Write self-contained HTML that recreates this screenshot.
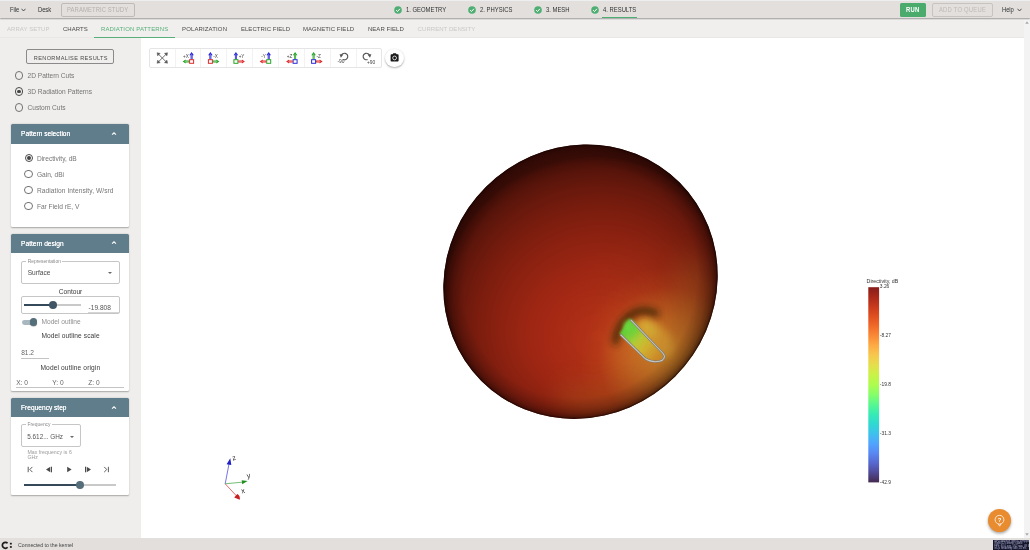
<!DOCTYPE html>
<html lang="en">
<head>
<meta charset="utf-8">
<title>Results - Radiation Patterns</title>
<style>
*{box-sizing:border-box;margin:0;padding:0}
html,body{width:1030px;height:550px;overflow:hidden;background:#fff}
body{position:relative;opacity:.999;font-family:"Liberation Sans",sans-serif;font-size:6.6px;color:#757575}
.a{position:absolute}
.t{position:absolute;white-space:nowrap;line-height:10px;height:10px}
/* top bar */
#topbar{left:0;top:0;width:1030px;height:18.3px;background:#e2dfdd;border-top:1px solid #eceef0;box-shadow:0 .8px 1.2px rgba(0,0,0,.4);z-index:5}
#topbar .t{font-size:6.4px;color:#333;transform:scaleX(.92);transform-origin:0 50%;margin-top:.1px}
.btn-o{position:absolute;border:1px solid #bdbab8;border-radius:2px}
.chk{position:absolute;width:8px;height:8px}
/* sub tabs */
#subbar{left:0;top:19px;width:1030px;height:19px;background:#f0efed;border-bottom:1px solid #e8e7e5}
#subbar .t{font-size:6px;letter-spacing:.06px;color:#4a4a4a;top:5px}
#subbar .dis{color:#c9c8c6}
#subbar .act{color:#57b07a}
/* sidebar */
#side{left:0;top:38px;width:141px;height:500px;background:#efeeec}
#side .t{margin-top:.6px}
.radio{position:absolute;width:8.4px;height:8.4px;border:.9px solid #737373;border-radius:50%;background:transparent}
.radio.on{border-color:#4a4a4a}
.radio.on::after{content:"";position:absolute;left:1.4px;top:1.4px;width:3.8px;height:3.8px;border-radius:50%;background:#444}
.panel{position:absolute;left:11.4px;width:117.8px;background:#fff;border-radius:1.5px;box-shadow:0 .5px 1.5px rgba(0,0,0,.3)}
.ph{position:absolute;left:0;top:0;width:100%;height:19.5px;background:#607d8b;border-radius:1.5px 1.5px 0 0}
.ph .t{left:9.7px;top:4.3px;color:#fff;font-size:6.6px;text-shadow:0 0 .3px #fff}
.ph svg{position:absolute;left:100px;top:6.9px;width:6px;height:5.2px}
.dark{color:#3a3a3a}
.fld{position:absolute;border:1px solid #c6c6c6;border-radius:2px;background:#fff}
.lbl{position:absolute;font-size:4.9px;line-height:6px;background:#fff;padding:0 1.5px;color:#8a8a8a;white-space:nowrap}
.tri{position:absolute;width:0;height:0;border-left:2px solid transparent;border-right:2px solid transparent;border-top:2.2px solid #666}
.ul{position:absolute;height:1px;background:#c4c4c4}
/* main */
#main{left:141px;top:38px;width:883px;height:500px;background:#fff}
#sb{left:1024px;top:20px;width:6px;height:518px;background:#f3f3f3}
#tool{left:149px;top:48px;width:233px;height:20px;border:1px solid #e5e5e5;border-radius:2px;background:#fff}
#tool i{position:absolute;top:0;width:1px;height:18px;background:#f2f2f2}
#cam{left:385px;top:48.5px;width:18.5px;height:18.5px;border-radius:50%;background:#fff;box-shadow:0 .8px 2px rgba(0,0,0,.35)}
/* status */
#status{left:0;top:538px;width:1030px;height:12px;background:#e2dfdd}
#fab{left:988px;top:509px;width:23px;height:23px;border-radius:50%;background:#e98b2f;box-shadow:0 1.5px 3px rgba(0,0,0,.35)}
</style>
</head>
<body>

<!-- ======= TOP BAR ======= -->
<div id="topbar" class="a">
  <span class="t" style="left:9.6px;top:4px;letter-spacing:-.1px">File</span>
  <svg class="a" style="left:20.6px;top:6.6px;width:5px;height:4px" viewBox="0 0 10 8"><path d="M1 1.5 L5 6 L9 1.5" fill="none" stroke="#333" stroke-width="1.6"/></svg>
  <span class="t" style="left:38px;top:4px;letter-spacing:-.1px">Desk</span>
  <div class="btn-o" style="left:60.8px;top:2px;width:74.6px;height:14px"></div>
  <span class="t" style="left:67.4px;top:4px;color:#b3b0ae;letter-spacing:.1px">PARAMETRIC STUDY</span>

  <svg class="chk" style="left:393.7px;top:5px" viewBox="0 0 16 16"><circle cx="8" cy="8" r="7.6" fill="#4fae72"/><path d="M4.2 8.3 L7 11 L11.8 5.6" fill="none" stroke="#fff" stroke-width="2"/></svg>
  <span class="t" style="left:405.8px;top:4px">1. GEOMETRY</span>
  <svg class="chk" style="left:467.9px;top:5px" viewBox="0 0 16 16"><circle cx="8" cy="8" r="7.6" fill="#4fae72"/><path d="M4.2 8.3 L7 11 L11.8 5.6" fill="none" stroke="#fff" stroke-width="2"/></svg>
  <span class="t" style="left:479.8px;top:4px">2. PHYSICS</span>
  <svg class="chk" style="left:533.7px;top:5px" viewBox="0 0 16 16"><circle cx="8" cy="8" r="7.6" fill="#4fae72"/><path d="M4.2 8.3 L7 11 L11.8 5.6" fill="none" stroke="#fff" stroke-width="2"/></svg>
  <span class="t" style="left:545.5px;top:4px">3. MESH</span>
  <svg class="chk" style="left:591px;top:5px" viewBox="0 0 16 16"><circle cx="8" cy="8" r="7.6" fill="#4fae72"/><path d="M4.2 8.3 L7 11 L11.8 5.6" fill="none" stroke="#fff" stroke-width="2"/></svg>
  <span class="t" style="left:602.9px;top:4px">4. RESULTS</span>
  <div class="a" style="left:602.3px;top:16px;width:34.8px;height:1.3px;background:#4fae72"></div>

  <div class="a" style="left:899.7px;top:2.2px;width:26.5px;height:13.5px;background:#4aab6d;border-radius:1.5px"></div>
  <span class="t" style="left:905.9px;top:4px;color:#fff;font-weight:700;letter-spacing:.25px">RUN</span>
  <div class="btn-o" style="left:932px;top:2.2px;width:60.5px;height:13.5px;border-color:#c6c3c1"></div>
  <span class="t" style="left:939px;top:4px;color:#bdbab8;letter-spacing:.22px">ADD TO QUEUE</span>
  <span class="t" style="left:1002.3px;top:4px;letter-spacing:-.1px">Help</span>
  <svg class="a" style="left:1016.8px;top:6.6px;width:5px;height:4px" viewBox="0 0 10 8"><path d="M1 1.5 L5 6 L9 1.5" fill="none" stroke="#333" stroke-width="1.6"/></svg>
</div>

<!-- ======= SUB TABS ======= -->
<div id="subbar" class="a">
  <span class="t dis" style="left:7px">ARRAY SETUP</span>
  <span class="t" style="left:62.9px">CHARTS</span>
  <span class="t act" style="left:101px;letter-spacing:.13px">RADIATION PATTERNS</span>
  <div class="a" style="left:94.2px;top:17.9px;width:81px;height:1.1px;background:#57b07a"></div>
  <span class="t" style="left:182px;letter-spacing:.13px">POLARIZATION</span>
  <span class="t" style="left:240.9px">ELECTRIC FIELD</span>
  <span class="t" style="left:303px">MAGNETIC FIELD</span>
  <span class="t" style="left:367.9px">NEAR FIELD</span>
  <span class="t dis" style="left:417.6px">CURRENT DENSITY</span>
</div>

<!-- ======= SIDEBAR ======= -->
<div id="side" class="a">
  <div class="btn-o" style="left:26.3px;top:11px;width:87.7px;height:14.6px;border-color:#8a8a8a;border-radius:2px"></div>
  <span class="t" style="left:33.8px;top:14px;font-size:5.6px;letter-spacing:.34px;color:#4a4a4a">RENORMALISE RESULTS</span>

  <div class="radio" style="left:14.8px;top:33.2px"></div>
  <span class="t" style="left:27.5px;top:32.4px">2D Pattern Cuts</span>
  <div class="radio on" style="left:14.8px;top:49.2px"></div>
  <span class="t" style="left:27.5px;top:48.4px">3D Radiation Patterns</span>
  <div class="radio" style="left:14.8px;top:65.3px"></div>
  <span class="t" style="left:27.5px;top:64.5px">Custom Cuts</span>

  <!-- Pattern selection -->
  <div class="panel" style="top:86.2px;height:102.8px">
    <div class="ph"><span class="t">Pattern selection</span>
      <svg viewBox="0 0 14 12"><path d="M2.5 8.5 L7 4 L11.5 8.5" fill="none" stroke="#fff" stroke-width="2.6"/></svg></div>
    <div class="radio on" style="left:13.3px;top:29.8px"></div>
    <span class="t" style="left:25.5px;top:29.2px">Directivity, dB</span>
    <div class="radio" style="left:13.1px;top:45.6px"></div>
    <span class="t" style="left:25.5px;top:44.8px">Gain, dBi</span>
    <div class="radio" style="left:13.1px;top:61.6px"></div>
    <span class="t" style="left:25.5px;top:60.8px;letter-spacing:.08px">Radiation Intensity, W/srd</span>
    <div class="radio" style="left:13.1px;top:77.7px"></div>
    <span class="t" style="left:25.5px;top:76.9px">Far Field rE, V</span>
  </div>

  <!-- Pattern design -->
  <div class="panel" style="top:195.6px;height:157.4px">
    <div class="ph"><span class="t" style="top:5px">Pattern design</span>
      <svg viewBox="0 0 14 12"><path d="M2.5 8.5 L7 4 L11.5 8.5" fill="none" stroke="#fff" stroke-width="2.6"/></svg></div>
    <div class="fld" style="left:9.8px;top:27.4px;width:98.6px;height:22.6px"></div>
    <span class="lbl" style="left:14.8px;top:25.4px">Representation</span>
    <span class="t dark" style="left:16.3px;top:33.9px;color:#4a4a4a">Surface</span>
    <div class="tri" style="left:96.9px;top:38.6px"></div>

    <span class="t dark" style="left:47.4px;top:52.9px">Contour</span>
    <div class="fld" style="left:9.8px;top:62.6px;width:98.6px;height:17.6px"></div>
    <div class="a" style="left:12.7px;top:70.8px;width:57px;height:1.2px;background:#c9c9c9"></div>
    <div class="a" style="left:12.7px;top:70.6px;width:29px;height:1.6px;background:#34495a"></div>
    <div class="a" style="left:37.5px;top:67.4px;width:8px;height:8px;border-radius:50%;background:#3f5565"></div>
    <span class="t" style="left:77.2px;top:68.7px;color:#555">-19.808</span>
    <div class="ul" style="left:76.3px;top:78.4px;width:31px;background:#d5d5d5"></div>

    <div class="a" style="left:10.4px;top:86.2px;width:14px;height:4.8px;border-radius:2.4px;background:#a9b8c0"></div>
    <div class="a" style="left:18.4px;top:84.7px;width:7.6px;height:7.6px;border-radius:50%;background:#546e7a;box-shadow:0 .5px 1px rgba(0,0,0,.4)"></div>
    <span class="t" style="left:30.1px;top:83px;color:#8f8f8f">Model outline</span>

    <span class="t dark" style="left:30.1px;top:96.9px;letter-spacing:.09px">Model outline scale</span>
    <span class="t" style="left:9.8px;top:113.8px;color:#666">81.2</span>
    <div class="ul" style="left:9.5px;top:124.2px;width:28px"></div>
    <span class="t dark" style="left:29.1px;top:128.6px;letter-spacing:.13px">Model outline origin</span>
    <span class="t" style="left:4.9px;top:143.7px;color:#666">X: 0</span>
    <span class="t" style="left:40.9px;top:143.7px;color:#666">Y: 0</span>
    <span class="t" style="left:76.9px;top:143.7px;color:#666">Z: 0</span>
    <div class="ul" style="left:4.2px;top:153.6px;width:108.7px"></div>
  </div>

  <!-- Frequency step -->
  <div class="panel" style="top:359.8px;height:97.2px">
    <div class="ph"><span class="t">Frequency step</span>
      <svg viewBox="0 0 14 12"><path d="M2.5 8.5 L7 4 L11.5 8.5" fill="none" stroke="#fff" stroke-width="2.6"/></svg></div>
    <div class="fld" style="left:9.7px;top:26.7px;width:60.3px;height:23px"></div>
    <span class="lbl" style="left:14.5px;top:24px">Frequency</span>
    <span class="t" style="left:15.8px;top:33.4px;font-size:6.4px;color:#555">5.612... GHz</span>
    <div class="tri" style="left:58.2px;top:38px"></div>
    <div class="a" style="left:16px;top:52.2px;width:46px;font-size:5.2px;line-height:5.1px;color:#9a9a9a;letter-spacing:.05px">Max frequency is 6 GHz</div>

    <svg class="a" style="left:14px;top:67px;width:90px;height:9px" viewBox="0 0 90 9">
      <g fill="none" stroke="#4a4a4a" stroke-width=".9">
        <path d="M3.2 1.8V7.2M7.4 1.9L4.8 4.5L7.4 7.1"/>
        <path d="M79.2 1.9L81.8 4.5L79.2 7.1M83.4 1.8V7.2"/>
      </g>
      <g fill="#4a4a4a">
        <path d="M25.3 1.7L21 4.5L25.3 7.3Z"/><rect x="26" y="1.7" width="1" height="5.6"/>
        <path d="M42.2 1.7L46.6 4.5L42.2 7.3Z"/>
        <rect x="60" y="1.7" width="1" height="5.6"/><path d="M61.7 1.7L66 4.5L61.7 7.3Z"/>
      </g>
    </svg>
    <div class="a" style="left:12.5px;top:86.7px;width:92px;height:1.2px;background:#c9c9c9"></div>
    <div class="a" style="left:12.5px;top:86.5px;width:56px;height:1.6px;background:#34495a"></div>
    <div class="a" style="left:64.6px;top:83.4px;width:7.8px;height:7.8px;border-radius:50%;background:#546e7a"></div>
  </div>
</div>

<!-- ======= MAIN ======= -->
<div id="main" class="a"></div>
<div id="sb" class="a">
  <svg class="a" style="left:1px;top:1px;width:4px;height:3px" viewBox="0 0 8 6"><path d="M4 .5L7.5 5.5H.5Z" fill="#a8a8a8"/></svg>
  <svg class="a" style="left:1px;top:513px;width:4px;height:3px" viewBox="0 0 8 6"><path d="M4 5.5L7.5 .5H.5Z" fill="#a8a8a8"/></svg>
</div>


<!-- ======= 3D VIEW ======= -->
<svg class="a" style="left:0;top:0;width:1030px;height:550px" viewBox="0 0 1030 550">
  <defs>
    <radialGradient id="sg" gradientUnits="userSpaceOnUse" cx="670" cy="358" r="130">
      <stop offset="0" stop-color="#dc8c2c"/>
      <stop offset=".15" stop-color="#d78029"/>
      <stop offset=".3" stop-color="#cd6b24"/>
      <stop offset=".42" stop-color="#c3551e"/>
      <stop offset=".55" stop-color="#b73a18"/>
      <stop offset=".7" stop-color="#b02f16"/>
      <stop offset="1" stop-color="#ae2a15"/>
    </radialGradient>
    <radialGradient id="rim" gradientUnits="objectBoundingBox" cx=".5" cy=".5" r=".5">
      <stop offset="0" stop-color="#120100" stop-opacity="0"/>
      <stop offset=".85" stop-color="#120100" stop-opacity="0"/>
      <stop offset=".92" stop-color="#120100" stop-opacity=".13"/>
      <stop offset=".96" stop-color="#120100" stop-opacity=".25"/>
      <stop offset=".985" stop-color="#120100" stop-opacity=".42"/>
      <stop offset="1" stop-color="#120100" stop-opacity=".85"/>
    </radialGradient>
    <linearGradient id="lg" gradientUnits="userSpaceOnUse" x1="626" y1="327" x2="658" y2="358">
      <stop offset="0" stop-color="#5ccf3c"/>
      <stop offset=".22" stop-color="#86d63a"/>
      <stop offset=".42" stop-color="#c2d236"/>
      <stop offset=".62" stop-color="#e0c033"/>
      <stop offset="1" stop-color="#e79c2e"/>
    </linearGradient>
    <mask id="light" maskUnits="userSpaceOnUse" x="430" y="130" width="300" height="300">
      <rect x="430" y="130" width="300" height="300" fill="rgb(79,79,79)"/>
      <g fill="#fff" transform="translate(580.5 281.7) rotate(-45) scale(140.3 134.0) rotate(117.00)">
        <path d="M-0.9006 0A0.9071 0.9999 0 1 1 0.9137 0A0.9071 0.9999 0 1 1 -0.9006 0ZM0.0371 -2H2V2H0.0371Z" fill-opacity="0.0292"/>
        <path d="M-0.8937 0A0.9068 0.9995 0 1 1 0.9199 0A0.9068 0.9995 0 1 1 -0.8937 0ZM0.0743 -2H2V2H0.0743Z" fill-opacity="0.0241"/>
        <path d="M-0.8865 0A0.9063 0.9989 0 1 1 0.9260 0A0.9063 0.9989 0 1 1 -0.8865 0ZM0.1114 -2H2V2H0.1114Z" fill-opacity="0.0228"/>
        <path d="M-0.8792 0A0.9055 0.9980 0 1 1 0.9318 0A0.9055 0.9980 0 1 1 -0.8792 0ZM0.1486 -2H2V2H0.1486Z" fill-opacity="0.0222"/>
        <path d="M-0.8716 0A0.9045 0.9969 0 1 1 0.9373 0A0.9045 0.9969 0 1 1 -0.8716 0ZM0.1857 -2H2V2H0.1857Z" fill-opacity="0.0219"/>
        <path d="M-0.8638 0A0.9033 0.9956 0 1 1 0.9427 0A0.9033 0.9956 0 1 1 -0.8638 0ZM0.2229 -2H2V2H0.2229Z" fill-opacity="0.0217"/>
        <path d="M-0.8558 0A0.9018 0.9940 0 1 1 0.9478 0A0.9018 0.9940 0 1 1 -0.8558 0ZM0.2600 -2H2V2H0.2600Z" fill-opacity="0.0216"/>
        <path d="M-0.8476 0A0.9001 0.9922 0 1 1 0.9527 0A0.9001 0.9922 0 1 1 -0.8476 0ZM0.2972 -2H2V2H0.2972Z" fill-opacity="0.0216"/>
        <path d="M-0.8391 0A0.8982 0.9901 0 1 1 0.9574 0A0.8982 0.9901 0 1 1 -0.8391 0ZM0.3343 -2H2V2H0.3343Z" fill-opacity="0.0217"/>
        <path d="M-0.8304 0A0.8961 0.9877 0 1 1 0.9618 0A0.8961 0.9877 0 1 1 -0.8304 0ZM0.3715 -2H2V2H0.3715Z" fill-opacity="0.0218"/>
        <path d="M-0.8215 0A0.8937 0.9851 0 1 1 0.9660 0A0.8937 0.9851 0 1 1 -0.8215 0ZM0.4086 -2H2V2H0.4086Z" fill-opacity="0.0219"/>
        <path d="M-0.8123 0A0.8912 0.9823 0 1 1 0.9700 0A0.8912 0.9823 0 1 1 -0.8123 0ZM0.4458 -2H2V2H0.4458Z" fill-opacity="0.0221"/>
        <path d="M-0.8029 0A0.8883 0.9792 0 1 1 0.9738 0A0.8883 0.9792 0 1 1 -0.8029 0ZM0.4829 -2H2V2H0.4829Z" fill-opacity="0.0224"/>
        <path d="M-0.7933 0A0.8853 0.9758 0 1 1 0.9773 0A0.8853 0.9758 0 1 1 -0.7933 0ZM0.5201 -2H2V2H0.5201Z" fill-opacity="0.0226"/>
        <path d="M-0.7834 0A0.8820 0.9721 0 1 1 0.9806 0A0.8820 0.9721 0 1 1 -0.7834 0ZM0.5572 -2H2V2H0.5572Z" fill-opacity="0.0229"/>
        <path d="M-0.7733 0A0.8784 0.9682 0 1 1 0.9836 0A0.8784 0.9682 0 1 1 -0.7733 0ZM0.5944 -2H2V2H0.5944Z" fill-opacity="0.0232"/>
        <path d="M-0.7629 0A0.8747 0.9641 0 1 1 0.9864 0A0.8747 0.9641 0 1 1 -0.7629 0ZM0.6315 -2H2V2H0.6315Z" fill-opacity="0.0235"/>
        <path d="M-0.7523 0A0.8706 0.9596 0 1 1 0.9889 0A0.8706 0.9596 0 1 1 -0.7523 0ZM0.6687 -2H2V2H0.6687Z" fill-opacity="0.0239"/>
        <path d="M-0.7415 0A0.8663 0.9549 0 1 1 0.9912 0A0.8663 0.9549 0 1 1 -0.7415 0ZM0.7058 -2H2V2H0.7058Z" fill-opacity="0.0242"/>
        <path d="M-0.7304 0A0.8618 0.9499 0 1 1 0.9932 0A0.8618 0.9499 0 1 1 -0.7304 0ZM0.7430 -2H2V2H0.7430Z" fill-opacity="0.0247"/>
        <path d="M-0.7190 0A0.8570 0.9446 0 1 1 0.9950 0A0.8570 0.9446 0 1 1 -0.7190 0ZM0.7801 -2H2V2H0.7801Z" fill-opacity="0.0251"/>
        <path d="M-0.7074 0A0.8520 0.9391 0 1 1 0.9965 0A0.8520 0.9391 0 1 1 -0.7074 0ZM0.8173 -2H2V2H0.8173Z" fill-opacity="0.0256"/>
        <path d="M-0.6955 0A0.8466 0.9332 0 1 1 0.9978 0A0.8466 0.9332 0 1 1 -0.6955 0ZM0.8544 -2H2V2H0.8544Z" fill-opacity="0.0260"/>
        <path d="M-0.6833 0A0.8410 0.9270 0 1 1 0.9988 0A0.8410 0.9270 0 1 1 -0.6833 0ZM0.8916 -2H2V2H0.8916Z" fill-opacity="0.0266"/>
        <path d="M-0.6709 0A0.8352 0.9205 0 1 1 0.9995 0A0.8352 0.9205 0 1 1 -0.6709 0ZM0.9287 -2H2V2H0.9287Z" fill-opacity="0.0271"/>
        <path d="M-0.6581 0A0.8290 0.9138 0 1 1 0.9999 0A0.8290 0.9138 0 1 1 -0.6581 0ZM0.9659 -2H2V2H0.9659Z" fill-opacity="0.0277"/>
        <path d="M-0.6451 0A0.8226 0.9067 0 1 1 1.0000 0A0.8226 0.9067 0 1 1 -0.6451 0Z" fill-opacity="0.0283"/>
        <path d="M-0.6318 0A0.8158 0.8992 0 1 1 0.9998 0A0.8158 0.8992 0 1 1 -0.6318 0Z" fill-opacity="0.0290"/>
        <path d="M-0.6182 0A0.8088 0.8914 0 1 1 0.9993 0A0.8088 0.8914 0 1 1 -0.6182 0Z" fill-opacity="0.0297"/>
        <path d="M-0.6042 0A0.8014 0.8833 0 1 1 0.9986 0A0.8014 0.8833 0 1 1 -0.6042 0Z" fill-opacity="0.0305"/>
        <path d="M-0.5900 0A0.7937 0.8749 0 1 1 0.9974 0A0.7937 0.8749 0 1 1 -0.5900 0Z" fill-opacity="0.0313"/>
        <path d="M-0.5754 0A0.7857 0.8660 0 1 1 0.9960 0A0.7857 0.8660 0 1 1 -0.5754 0Z" fill-opacity="0.0321"/>
        <path d="M-0.5605 0A0.7773 0.8568 0 1 1 0.9942 0A0.7773 0.8568 0 1 1 -0.5605 0Z" fill-opacity="0.0330"/>
        <path d="M-0.5452 0A0.7686 0.8472 0 1 1 0.9921 0A0.7686 0.8472 0 1 1 -0.5452 0Z" fill-opacity="0.0340"/>
        <path d="M-0.5295 0A0.7596 0.8372 0 1 1 0.9896 0A0.7596 0.8372 0 1 1 -0.5295 0Z" fill-opacity="0.0350"/>
        <path d="M-0.5135 0A0.7501 0.8268 0 1 1 0.9867 0A0.7501 0.8268 0 1 1 -0.5135 0Z" fill-opacity="0.0362"/>
        <path d="M-0.4971 0A0.7403 0.8159 0 1 1 0.9834 0A0.7403 0.8159 0 1 1 -0.4971 0Z" fill-opacity="0.0374"/>
        <path d="M-0.4803 0A0.7300 0.8046 0 1 1 0.9797 0A0.7300 0.8046 0 1 1 -0.4803 0Z" fill-opacity="0.0386"/>
        <path d="M-0.4630 0A0.7193 0.7929 0 1 1 0.9756 0A0.7193 0.7929 0 1 1 -0.4630 0Z" fill-opacity="0.0400"/>
        <path d="M-0.4453 0A0.7082 0.7806 0 1 1 0.9711 0A0.7082 0.7806 0 1 1 -0.4453 0Z" fill-opacity="0.0416"/>
        <path d="M-0.4272 0A0.6966 0.7679 0 1 1 0.9661 0A0.6966 0.7679 0 1 1 -0.4272 0Z" fill-opacity="0.0432"/>
        <path d="M-0.4085 0A0.6846 0.7545 0 1 1 0.9606 0A0.6846 0.7545 0 1 1 -0.4085 0Z" fill-opacity="0.0450"/>
        <path d="M-0.3894 0A0.6720 0.7407 0 1 1 0.9546 0A0.6720 0.7407 0 1 1 -0.3894 0Z" fill-opacity="0.0469"/>
        <path d="M-0.3697 0A0.6588 0.7262 0 1 1 0.9480 0A0.6588 0.7262 0 1 1 -0.3697 0Z" fill-opacity="0.0491"/>
        <path d="M-0.3494 0A0.6451 0.7111 0 1 1 0.9408 0A0.6451 0.7111 0 1 1 -0.3494 0Z" fill-opacity="0.0514"/>
        <path d="M-0.3285 0A0.6308 0.6953 0 1 1 0.9331 0A0.6308 0.6953 0 1 1 -0.3285 0Z" fill-opacity="0.0540"/>
        <path d="M-0.3069 0A0.6158 0.6787 0 1 1 0.9247 0A0.6158 0.6787 0 1 1 -0.3069 0Z" fill-opacity="0.0569"/>
        <path d="M-0.2846 0A0.6001 0.6614 0 1 1 0.9155 0A0.6001 0.6614 0 1 1 -0.2846 0Z" fill-opacity="0.0602"/>
        <path d="M-0.2616 0A0.5836 0.6433 0 1 1 0.9056 0A0.5836 0.6433 0 1 1 -0.2616 0Z" fill-opacity="0.0638"/>
        <path d="M-0.2377 0A0.5663 0.6242 0 1 1 0.8949 0A0.5663 0.6242 0 1 1 -0.2377 0Z" fill-opacity="0.0680"/>
        <path d="M-0.2129 0A0.5481 0.6041 0 1 1 0.8833 0A0.5481 0.6041 0 1 1 -0.2129 0Z" fill-opacity="0.0727"/>
        <path d="M-0.1872 0A0.5289 0.5830 0 1 1 0.8706 0A0.5289 0.5830 0 1 1 -0.1872 0Z" fill-opacity="0.0782"/>
        <path d="M-0.1602 0A0.5086 0.5605 0 1 1 0.8569 0A0.5086 0.5605 0 1 1 -0.1602 0Z" fill-opacity="0.0846"/>
        <path d="M-0.1321 0A0.4870 0.5367 0 1 1 0.8418 0A0.4870 0.5367 0 1 1 -0.1321 0Z" fill-opacity="0.0921"/>
        <path d="M-0.1025 0A0.4639 0.5113 0 1 1 0.8254 0A0.4639 0.5113 0 1 1 -0.1025 0Z" fill-opacity="0.1012"/>
        <path d="M-0.0712 0A0.4392 0.4841 0 1 1 0.8072 0A0.4392 0.4841 0 1 1 -0.0712 0Z" fill-opacity="0.1123"/>
        <path d="M-0.0380 0A0.4126 0.4547 0 1 1 0.7872 0A0.4126 0.4547 0 1 1 -0.0380 0Z" fill-opacity="0.1261"/>
        <path d="M-0.0024 0A0.3835 0.4227 0 1 1 0.7647 0A0.3835 0.4227 0 1 1 -0.0024 0Z" fill-opacity="0.1439"/>
        <path d="M0.0362 0A0.3515 0.3875 0 1 1 0.7393 0A0.3515 0.3875 0 1 1 0.0362 0Z" fill-opacity="0.1677"/>
        <path d="M0.0786 0A0.3157 0.3480 0 1 1 0.7100 0A0.3157 0.3480 0 1 1 0.0786 0Z" fill-opacity="0.2010"/>
        <path d="M0.1264 0A0.2745 0.3026 0 1 1 0.6754 0A0.2745 0.3026 0 1 1 0.1264 0Z" fill-opacity="0.2509"/>
        <path d="M0.1824 0A0.2250 0.2480 0 1 1 0.6325 0A0.2250 0.2480 0 1 1 0.1824 0Z" fill-opacity="0.3341"/>
        <path d="M0.2543 0A0.1598 0.1761 0 1 1 0.5738 0A0.1598 0.1761 0 1 1 0.2543 0Z" fill-opacity="0.5006"/>
        <path d="M0.3796 0A0.0406 0.0447 0 1 1 0.4607 0A0.0406 0.0447 0 1 1 0.3796 0Z" fill-opacity="0.9361"/>
      </g>
    </mask>
    <clipPath id="sc"><ellipse cx="580.5" cy="281.7" rx="140.3" ry="134" transform="rotate(-45 580.5 281.7)"/></clipPath>
    <filter id="b1" x="-50%" y="-50%" width="200%" height="200%"><feGaussianBlur stdDeviation="1.2"/></filter>
    <filter id="b8" x="-100%" y="-100%" width="300%" height="300%"><feGaussianBlur stdDeviation="12"/></filter>
    <filter id="b2" x="-50%" y="-50%" width="200%" height="200%"><feGaussianBlur stdDeviation="2"/></filter>
    <filter id="b3" x="-50%" y="-50%" width="200%" height="200%"><feGaussianBlur stdDeviation="3.5"/></filter>
    <linearGradient id="turbo" x1="0" y1="0" x2="0" y2="1">
      <stop offset="0" stop-color="#7a0402"/>
      <stop offset="0.05" stop-color="#a01101"/>
      <stop offset="0.1" stop-color="#c32402"/>
      <stop offset="0.15" stop-color="#dd3c07"/>
      <stop offset="0.2" stop-color="#ef5a11"/>
      <stop offset="0.25" stop-color="#fa7d20"/>
      <stop offset="0.3" stop-color="#fda330"/>
      <stop offset="0.35" stop-color="#f6c23a"/>
      <stop offset="0.4" stop-color="#e1dc37"/>
      <stop offset="0.45" stop-color="#c3f133"/>
      <stop offset="0.5" stop-color="#a4fc3b"/>
      <stop offset="0.55" stop-color="#78fe59"/>
      <stop offset="0.6" stop-color="#46f783"/>
      <stop offset="0.65" stop-color="#20e9ac"/>
      <stop offset="0.7" stop-color="#18d5cc"/>
      <stop offset="0.75" stop-color="#28bbeb"/>
      <stop offset="0.8" stop-color="#3e9bfe"/>
      <stop offset="0.85" stop-color="#467af2"/>
      <stop offset="0.9" stop-color="#4458cb"/>
      <stop offset="0.95" stop-color="#3c358b"/>
      <stop offset="1" stop-color="#30123b"/>
    </linearGradient>
  </defs>

  <!-- radiation pattern -->
  <g clip-path="url(#sc)">
    <rect x="430" y="130" width="300" height="300" fill="#0a0000"/>
    <g mask="url(#light)">
      <rect x="430" y="130" width="300" height="300" fill="url(#sg)"/>
      <ellipse cx="704" cy="310" rx="24" ry="58" transform="rotate(-14 704 310)" fill="#d2802a" opacity=".3" filter="url(#b8)"/>
      <ellipse cx="612" cy="410" rx="58" ry="22" transform="rotate(14 612 410)" fill="#c8641f" opacity=".38" filter="url(#b8)"/>
      <!-- glow on the far wall of the null -->
      <ellipse cx="655" cy="338" rx="24" ry="13" transform="rotate(45 655 338)" fill="#e6a634" opacity=".8" filter="url(#b3)"/>
      <!-- shadow hugging the open end of the notch -->
      <path d="M615.5 342 Q616.5 325 631 314.5 Q643 307 656 313.5" fill="none" stroke="#241a05" stroke-width="6" stroke-linecap="round" opacity=".8" filter="url(#b3)"/>
      <!-- colours inside the null -->
      <ellipse cx="649" cy="329" rx="11" ry="5.5" transform="rotate(45 649 329)" fill="#e0bd38" opacity=".75" filter="url(#b3)"/>
      <path d="M629.5 318.5 L662.7 353 C666 356.5 664 360.5 659.5 361.3 C654.5 362.1 649.5 361.6 645.5 358.8 L619.5 333.5 Z" fill="url(#lg)" filter="url(#b1)"/>
      <ellipse cx="630" cy="327" rx="6" ry="7" transform="rotate(-40 630 327)" fill="#6fdc3e" opacity=".9" filter="url(#b2)"/>
    </g>
    <ellipse cx="580.5" cy="281.7" rx="140.3" ry="134" transform="rotate(-45 580.5 281.7)" fill="url(#rim)"/>
  </g>
  <!-- model outline -->
  <path d="M631.2 320.3 L662.7 353 C666 356.5 664 360.5 659.5 361.3 C654.5 362.1 649.5 361.6 645.5 358.8 L620.9 335" fill="none" stroke="#7c7c74" stroke-width="2.3" stroke-linecap="round"/>
  <path d="M631.2 320.3 L662.7 353 C666 356.5 664 360.5 659.5 361.3 C654.5 362.1 649.5 361.6 645.5 358.8 L620.9 335" fill="none" stroke="#c6c6c2" stroke-width="1.05" stroke-linecap="round"/>

  <!-- axes triad -->
  <g stroke-width=".7" fill="none">
    <path d="M225.2 483.8L229.2 463" stroke="#3a3ad8"/>
    <path d="M225.2 483.8L243 482.1" stroke="#3aa03a"/>
    <path d="M225.2 483.8L236.4 495.8" stroke="#d23030"/>
  </g>
  <path d="M230.3 458.2L231.3 465.1L226.6 464.2Z" fill="#2020c8"/>
  <path d="M247.6 481L242.2 484.3L241.7 480.2Z" fill="#1f8f1f"/>
  <path d="M239.8 499.8L234.2 497.4L237.3 493.9Q240.4 495.6 239.8 499.8Z" fill="#c81e1e"/>
  <g font-family="Liberation Sans, sans-serif" font-size="7.2" fill="#222">
    <text x="232.2" y="460.2" transform="rotate(-12 234 458)">z</text>
    <text x="246.8" y="477.8" transform="rotate(-12 248.6 476)">y</text>
    <text x="241.2" y="493.2" transform="rotate(-12 243 491)">x</text>
  </g>

  <!-- colour bar -->
  <rect x="868.3" y="287.2" width="10.8" height="195.2" fill="url(#turbo)" opacity=".9"/>
  <g font-family="Liberation Sans, sans-serif" font-size="4.9" fill="#333">
    <text x="866.6" y="283.4" font-size="5.25">Directivity, dB</text>
    <text x="879.8" y="288.2">3.26</text>
    <text x="879.8" y="336.9">-8.27</text>
    <text x="879.8" y="385.7">-19.8</text>
    <text x="879.8" y="434.6">-31.3</text>
    <text x="879.8" y="483.6">-42.9</text>
  </g>
</svg>

<div id="tool" class="a">
  <i style="left:24.8px"></i><i style="left:50.4px"></i><i style="left:76.4px"></i><i style="left:102.3px"></i><i style="left:128.1px"></i><i style="left:153.9px"></i><i style="left:179.7px"></i><i style="left:205.5px"></i>
</div>
<div id="cam" class="a"></div>

<!-- ======= STATUS ======= -->
<div id="status" class="a">
  <span class="t" style="left:18px;top:2px;font-size:5.2px;color:#444">Connected to the kernel</span>
</div>
<div id="fab" class="a"></div>
<svg class="a" style="left:0;top:0;width:1030px;height:550px;pointer-events:none" viewBox="0 0 1030 550">
  <!-- toolbar icons -->
  <g font-family="Liberation Sans, sans-serif">
    <g stroke="#5c5c5c" stroke-width=".9" fill="#5c5c5c" transform="translate(0 .3)">
      <path d="M158.3 53.7 L166.3 61.7 M166.3 53.7 L158.3 61.7" fill="none"/>
      <path d="M157 52.4 L160.2 53 L157.6 55.6Z M167.6 52.4 L167 55.6 L164.4 53Z M157 63 L157.6 59.8 L160.2 62.4Z M167.6 63 L164.4 62.4 L167 59.8Z" stroke-width=".4"/>
    </g>
    <path d="M191.6 52 L193.9 55.2 H192.6 V59.6 H190.6 V55.2 H189.29999999999998 Z" fill="#2a2ad8"/>
    <path d="M191.6 54.2 V59" stroke="#fff" stroke-width=".5" opacity=".7"/>
    <rect x="189.6" y="59.7" width="4" height="3.6" fill="#fff" stroke="#e02a2a" stroke-width="1"/>
    <path d="M182.6 61.5 L185.6 59.4 V60.6 H189.2 V62.4 H185.6 V63.6 Z" fill="#28a428"/>
    <path d="M188.6 61.5 H184.79999999999998" stroke="#fff" stroke-width=".5" opacity=".7"/>
    <text x="188.79999999999998" y="58" font-size="4.6" fill="#444" text-anchor="end">+X</text>
    <path d="M210.4 52 L212.70000000000002 55.2 H211.4 V59.6 H209.4 V55.2 H208.1 Z" fill="#2a2ad8"/>
    <path d="M210.4 54.2 V59" stroke="#fff" stroke-width=".5" opacity=".7"/>
    <rect x="208.4" y="59.7" width="4" height="3.6" fill="#fff" stroke="#e02a2a" stroke-width="1"/>
    <path d="M219.4 61.5 L216.4 59.4 V60.6 H212.8 V62.4 H216.4 V63.6 Z" fill="#28a428"/>
    <path d="M213.4 61.5 H217.20000000000002" stroke="#fff" stroke-width=".5" opacity=".7"/>
    <text x="213.20000000000002" y="58" font-size="4.6" fill="#444">-X</text>
    <path d="M235.9 52 L238.20000000000002 55.2 H236.9 V59.6 H234.9 V55.2 H233.6 Z" fill="#2a2ad8"/>
    <path d="M235.9 54.2 V59" stroke="#fff" stroke-width=".5" opacity=".7"/>
    <rect x="233.9" y="59.7" width="4" height="3.6" fill="#fff" stroke="#28a428" stroke-width="1"/>
    <path d="M244.9 61.5 L241.9 59.4 V60.6 H238.3 V62.4 H241.9 V63.6 Z" fill="#e02a2a"/>
    <path d="M238.9 61.5 H242.70000000000002" stroke="#fff" stroke-width=".5" opacity=".7"/>
    <text x="238.70000000000002" y="58" font-size="4.6" fill="#444">+Y</text>
    <path d="M268.7 52 L271.0 55.2 H269.7 V59.6 H267.7 V55.2 H266.4 Z" fill="#2a2ad8"/>
    <path d="M268.7 54.2 V59" stroke="#fff" stroke-width=".5" opacity=".7"/>
    <rect x="266.7" y="59.7" width="4" height="3.6" fill="#fff" stroke="#28a428" stroke-width="1"/>
    <path d="M259.7 61.5 L262.7 59.4 V60.6 H266.3 V62.4 H262.7 V63.6 Z" fill="#e02a2a"/>
    <path d="M265.7 61.5 H261.9" stroke="#fff" stroke-width=".5" opacity=".7"/>
    <text x="265.9" y="58" font-size="4.6" fill="#444" text-anchor="end">-Y</text>
    <path d="M295.1 52 L297.40000000000003 55.2 H296.1 V59.6 H294.1 V55.2 H292.8 Z" fill="#28a428"/>
    <path d="M295.1 54.2 V59" stroke="#fff" stroke-width=".5" opacity=".7"/>
    <rect x="293.1" y="59.7" width="4" height="3.6" fill="#fff" stroke="#2a2ad8" stroke-width="1"/>
    <path d="M286.1 61.5 L289.1 59.4 V60.6 H292.70000000000005 V62.4 H289.1 V63.6 Z" fill="#e02a2a"/>
    <path d="M292.1 61.5 H288.3" stroke="#fff" stroke-width=".5" opacity=".7"/>
    <text x="292.3" y="58" font-size="4.6" fill="#444" text-anchor="end">+Z</text>
    <path d="M313.6 52 L315.90000000000003 55.2 H314.6 V59.6 H312.6 V55.2 H311.3 Z" fill="#28a428"/>
    <path d="M313.6 54.2 V59" stroke="#fff" stroke-width=".5" opacity=".7"/>
    <rect x="311.6" y="59.7" width="4" height="3.6" fill="#fff" stroke="#2a2ad8" stroke-width="1"/>
    <path d="M322.6 61.5 L319.6 59.4 V60.6 H316.0 V62.4 H319.6 V63.6 Z" fill="#e02a2a"/>
    <path d="M316.6 61.5 H320.40000000000003" stroke="#fff" stroke-width=".5" opacity=".7"/>
    <text x="316.40000000000003" y="58" font-size="4.6" fill="#444">-Z</text>
    <g fill="none" stroke="#555" stroke-width="1.15">
      <path d="M341.3 55.9 A3.25 3.25 0 1 1 343.3 59.5"/>
      <path d="M369.6 55.9 A3.25 3.25 0 1 0 367.6 59.5"/>
    </g>
    <path d="M339.5 54.2 L343.3 54.4 L340.9 57.8Z" fill="#555"/>
    <path d="M371.4 54.2 L367.6 54.4 L370 57.8Z" fill="#555"/>
    <text x="337.4" y="63.3" font-size="4.9" fill="#444">-90</text>
    <text x="366.9" y="63.6" font-size="4.9" fill="#444">+90</text>
    <!-- camera -->
    <g transform="translate(0 .35)"><path d="M392.6 54 L393.3 53 H395.9 L396.6 54 H397.8 Q398.6 54 398.6 54.8 V60.4 Q398.6 61.2 397.8 61.2 H391.4 Q390.6 61.2 390.6 60.4 V54.8 Q390.6 54 391.4 54Z" fill="#1a1a1a"/>
    <circle cx="394.6" cy="57.6" r="1.9" fill="#1a1a1a" stroke="#fff" stroke-width=".8"/></g>
  </g>

  <!-- help fab icon -->
  <g fill="none" stroke="#fff" stroke-width=".75">
    <circle cx="999.5" cy="519.7" r="4.4"/>
    <path d="M998.3 524 L999.7 526.2 L1001 523.9"/>
  </g>
  <text x="999.6" y="521.9" font-family="Liberation Sans, sans-serif" font-size="6" font-weight="700" fill="#fff" text-anchor="middle">?</text>
  <!-- logo in status bar -->
  <path d="M7.6 543.3 A3 3 0 1 0 7.6 547.3" fill="none" stroke="#1c1c1c" stroke-width="1.7"/>
  <rect x="9.9" y="542.8" width="1.9" height="1.7" fill="#1c1c1c"/>
  <rect x="9.9" y="546.1" width="1.9" height="1.7" fill="#1c1c1c"/>
</svg>
<div class="a" style="left:993px;top:539.7px;width:36px;height:10.3px;background:#15152b;overflow:hidden;color:#aeb3d4;font-size:2.7px;line-height:2.55px;padding:1px 1px 0 1.2px;white-space:nowrap;letter-spacing:-.02px">GPU: ANGLE (Mesa, llvmpipe)<br>WebGL2 context: stable<br>FPS: 60.0 avg, 59.2 min, 48 MB<br>vtk.js rendering: idle, 16 ms</div>

</body>
</html>
